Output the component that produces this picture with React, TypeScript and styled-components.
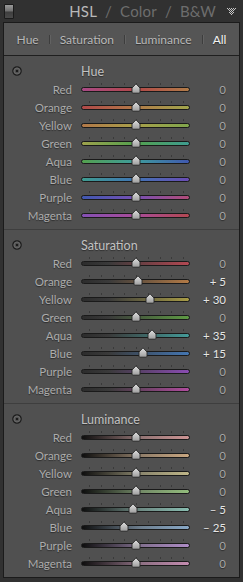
import React from 'react';
import styled, { createGlobalStyle } from 'styled-components';

const GlobalStyle = createGlobalStyle`
  html, body {
    margin: 0;
    padding: 0;
    background: #313131;
    font-family: Lato, 'Liberation Sans', sans-serif;
    overflow: hidden;
  }
`;

const Page = styled.div`
  width: 243px;
  height: 582px;
  display: flex;
  flex-direction: column;
  background: #313131;
`;

const TopBar = styled.div`
  height: 22px;
  display: flex;
  align-items: center;
  padding: 0 7px 0 4px;
  box-sizing: border-box;
`;

const Switch = styled.div`
  width: 8px;
  height: 13px;
  border: 1px solid #1b1b1b;
  border-radius: 1px;
  background: linear-gradient(to bottom, #9a9a9a 0%, #6e6e6e 48%, #3e3e3e 52%, #4a4a4a 100%);
`;

const Title = styled.div`
  margin-left: auto;
  display: flex;
  align-items: baseline;
  font-size: 15px;
  color: #6d6d6d;
  letter-spacing: 0.2px;
`;

const TitleWord = styled.span<{ $active?: boolean }>`
  color: ${p => (p.$active ? '#b9b9b9' : '#6d6d6d')};
`;

const Slash = styled.span`
  padding: 0 8px;
`;

const Collapse = styled.svg`
  margin-left: 11px;
  margin-top: 2px;
`;

const Panel = styled.div`
  margin: 0 3px;
  border: 1px solid #1b1b1b;
  background: #505050;
`;

const Tabs = styled.div`
  height: 32px;
  display: flex;
  align-items: center;
  justify-content: center;
  background: #555555;
  border-bottom: 1px solid #1f1f1f;
`;

const Tab = styled.span<{ $active?: boolean }>`
  font-size: 12px;
  padding: 0 10px;
  color: ${p => (p.$active ? '#f4f4f4' : '#b9b9b9')};
  text-shadow: 0 1px 1px rgba(0, 0, 0, 0.45);
`;

const TabDivider = styled.span`
  width: 1px;
  height: 9px;
  background: #3d3d3d;
  box-shadow: 1px 0 0 #626262;
`;

const Section = styled.div`
  padding: 6px 0 5px;
  & + & {
    border-top: 1px solid #3e3e3e;
  }
`;

const HeadRow = styled.div`
  height: 18px;
  display: flex;
  align-items: center;
`;

const IconCell = styled.div`
  width: 68px;
  padding-left: 8px;
  box-sizing: border-box;
  display: flex;
  align-items: center;
`;

const SectionTitle = styled.span`
  margin-left: 9px;
  font-size: 12.5px;
  color: #c2c2c2;
  text-shadow: 0 1px 1px rgba(0, 0, 0, 0.45);
`;

const Row = styled.div`
  height: 18px;
  display: flex;
  align-items: center;
`;

const Label = styled.span`
  width: 68px;
  text-align: right;
  font-size: 11.5px;
  color: #acacac;
  text-shadow: 0 1px 1px rgba(0, 0, 0, 0.45);
`;

const Slider = styled.div`
  position: relative;
  margin-left: 9px;
  width: 109px;
  height: 18px;
`;

const Ticks = styled.div`
  position: absolute;
  left: 8px;
  width: 95px;
  top: 3px;
  height: 2px;
  background: repeating-linear-gradient(to right, #3a3a3a 0, #3a3a3a 1px, transparent 1px, transparent 11.75px);
`;

const Track = styled.div<{ $bg: string }>`
  position: absolute;
  left: 0;
  right: 0;
  top: 7px;
  height: 3px;
  border: 1px solid #1a1a1a;
  border-radius: 3px;
  background: ${p => p.$bg};
`;

const Thumb = styled.svg`
  position: absolute;
  top: 3px;
`;

const Value = styled.span<{ $set: boolean }>`
  flex: 1;
  text-align: right;
  padding-right: 13px;
  font-size: 11.5px;
  white-space: pre;
  color: ${p => (p.$set ? '#e6e6e6' : '#a6a6a6')};
  text-shadow: 0 1px 1px rgba(0, 0, 0, 0.45);
`;

const names = ['Red', 'Orange', 'Yellow', 'Green', 'Aqua', 'Blue', 'Purple', 'Magenta'];

const hueTracks = [
  ['#a84a86', '#b24848', '#b07c48'],
  ['#b04848', '#b27a48', '#a0a64c'],
  ['#b27848', '#a8a04a', '#80a64c'],
  ['#9ea24c', '#54a04e', '#3e9c90'],
  ['#54a04e', '#3e9c9c', '#4058b0'],
  ['#3e9c90', '#4074b4', '#6a4cb4'],
  ['#4058b0', '#7650b4', '#b24c78'],
  ['#8450b4', '#a84c98', '#b24852'],
];

const satColors = ['#b24852', '#b27a46', '#a89c46', '#5e9a44', '#449a98', '#4476b2', '#8a4cb2', '#b04c9e'];
const lumColors = ['#cc9494', '#c8a680', '#bfb688', '#92bc7c', '#88bcb0', '#88a8c6', '#ae8cc6', '#c48cb0'];

const trackFor = (kind: string, i: number) => {
  if (kind === 'hue') {
    const [a, b, c] = hueTracks[i];
    return `linear-gradient(to right, ${a}, ${b} 50%, ${c})`;
  }
  if (kind === 'sat') return `linear-gradient(to right, #2c2c2c 0%, #3a3a3a 25%, ${satColors[i]} 100%)`;
  return `linear-gradient(to right, #0e0e0e 0%, ${lumColors[i]}88 55%, ${lumColors[i]} 100%)`;
};

const sections = [
  { title: 'Hue', kind: 'hue', values: [0, 0, 0, 0, 0, 0, 0, 0] },
  { title: 'Saturation', kind: 'sat', values: [0, 5, 30, 0, 35, 15, 0, 0] },
  { title: 'Luminance', kind: 'lum', values: [0, 0, 0, 0, -5, -25, 0, 0] },
];

const fmt = (v: number) => (v === 0 ? '0' : v > 0 ? `+ ${v}` : `\u2013 ${-v}`);

const EyeIcon = () => (
  <svg width="10" height="10" viewBox="0 0 10 10">
    <circle cx="5" cy="5" r="4.2" fill="#575757" stroke="#1c1c1c" strokeWidth="1.2" />
    <circle cx="5" cy="5" r="3" fill="none" stroke="#727272" strokeWidth="0.6" />
    <circle cx="5" cy="5" r="1.3" fill="#1c1c1c" />
  </svg>
);

const TriangleIcon = () => {
  const dots: JSX.Element[] = [];
  for (let y = 0; y < 8; y++) {
    for (let x = 0; x < 9; x++) {
      const inside = Math.abs(x - 4) <= (8 - y) / 2;
      if (inside && (x + y) % 2 === 0) dots.push(<rect key={`${x}-${y}`} x={x} y={y} width="1" height="1" fill="#c4c4c4" />);
    }
  }
  return (
    <Collapse width="9" height="8" viewBox="0 0 9 8">
      {dots}
    </Collapse>
  );
};

const HslSlider: React.FC<{ bg: string; value: number }> = ({ bg, value }) => (
  <Slider>
    <Ticks />
    <Track $bg={bg} />
    <Thumb width="10" height="11" viewBox="0 0 10 11" style={{ left: 54.5 + value * 0.47 - 5 }}>
      <defs>
        <linearGradient id="thumbFill" x1="0" y1="0" x2="0" y2="1">
          <stop offset="0" stopColor="#e2e2e2" />
          <stop offset="1" stopColor="#9c9c9c" />
        </linearGradient>
      </defs>
      <path d="M1 9.2 V5 L5 0.8 L9 5 V9.2 Q9 10.2 8 10.2 H2 Q1 10.2 1 9.2 Z" fill="url(#thumbFill)" stroke="#262626" strokeWidth="0.9" />
    </Thumb>
  </Slider>
);

const App: React.FC = () => (
  <Page>
    <GlobalStyle />
    <TopBar>
      <Switch />
      <Title>
        <TitleWord $active>HSL</TitleWord>
        <Slash>/</Slash>
        <TitleWord>Color</TitleWord>
        <Slash>/</Slash>
        <TitleWord>B&amp;W</TitleWord>
      </Title>
      <TriangleIcon />
    </TopBar>
    <Panel>
      <Tabs>
        <Tab>Hue</Tab>
        <TabDivider />
        <Tab>Saturation</Tab>
        <TabDivider />
        <Tab>Luminance</Tab>
        <TabDivider />
        <Tab $active>All</Tab>
      </Tabs>
      {sections.map(s => (
        <Section key={s.title}>
          <HeadRow>
            <IconCell>
              <EyeIcon />
            </IconCell>
            <SectionTitle>{s.title}</SectionTitle>
          </HeadRow>
          {names.map((n, i) => (
            <Row key={n}>
              <Label>{n}</Label>
              <HslSlider bg={trackFor(s.kind, i)} value={s.values[i]} />
              <Value $set={s.values[i] !== 0}>{fmt(s.values[i])}</Value>
            </Row>
          ))}
        </Section>
      ))}
    </Panel>
  </Page>
);

export default App;
